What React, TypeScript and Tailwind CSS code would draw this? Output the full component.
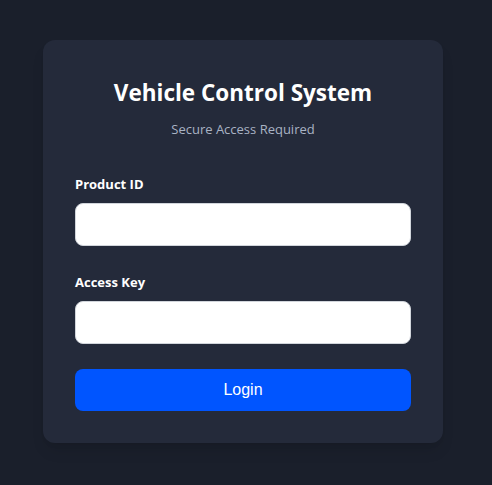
export default function App() {
  return (
    <div className="min-h-screen bg-[#1a1f2b] pt-10 font-['Open_Sans',sans-serif]">
      <div className="ml-[43px] w-[400px] rounded-xl bg-[#242a3a] px-8 pt-[37px] pb-8 shadow-lg">
        <h1 className="text-center text-[22.5px] leading-[32px] font-bold text-white">
          Vehicle Control System
        </h1>
        <p className="mt-[10px] text-center text-[13px] leading-5 text-[#a9b3c4]">
          Secure Access Required
        </p>

        <div className="mt-[35px]">
          <label className="block text-[13px] leading-5 font-bold text-white">Product ID</label>
          <input
            type="text"
            className="mt-[9px] block h-[43px] w-full rounded-lg border border-[#d1d5db] bg-white px-3"
          />
        </div>

        <div className="mt-[26px]">
          <label className="block text-[13px] leading-5 font-bold text-white">Access Key</label>
          <input
            type="password"
            className="mt-[9px] block h-[43px] w-full rounded-lg border border-[#d1d5db] bg-white px-3"
          />
        </div>

        <button className="mt-[25px] h-[42px] w-full rounded-lg bg-[#0055ff] font-['Liberation_Sans',Arial,sans-serif] text-base text-white">
          Login
        </button>
      </div>
    </div>
  );
}
